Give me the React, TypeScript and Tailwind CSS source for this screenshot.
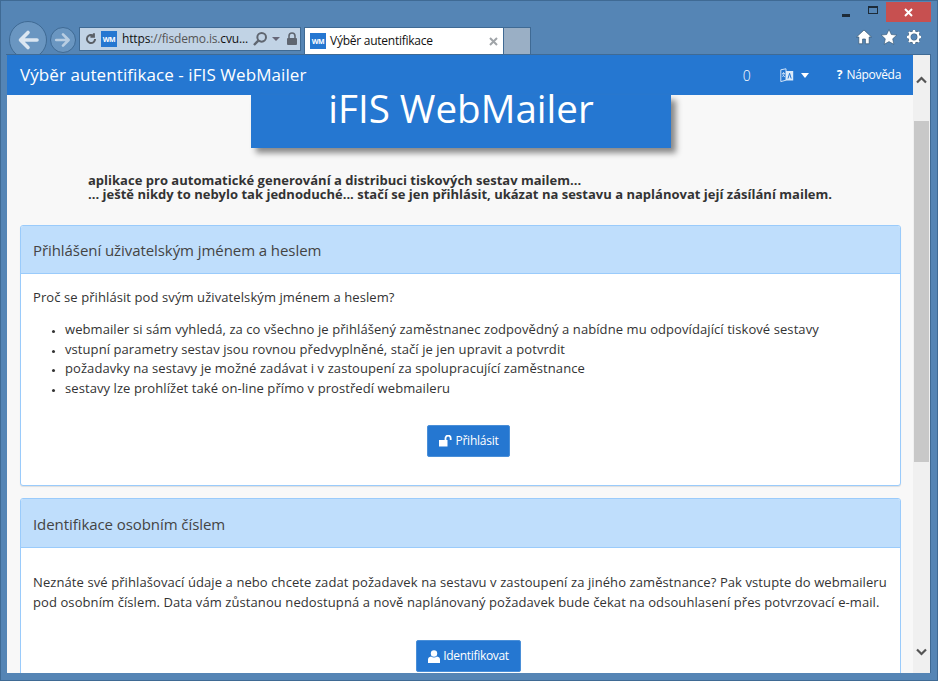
import React from "react";

const font = { fontFamily: '"Open Sans", "Noto Sans", sans-serif' };

function WM({ className }: { className: string }) {
  return (
    <span className={`flex items-center justify-center bg-[#2577d1] text-white font-bold text-[7px] leading-none tracking-tighter ${className}`}>WM</span>
  );
}

function NavArrow({ size, color }: { size: number; color: string }) {
  return (
    <svg width={size} height={size} viewBox="0 0 24 24" fill="none">
      <path d="M21 12H5M12 4.5L4.5 12l7.5 7.5" stroke={color} strokeWidth="3.6" strokeLinecap="round" strokeLinejoin="round" />
    </svg>
  );
}

export default function App() {
  return (
    <div style={font} className="w-[938px] h-[681px] overflow-hidden bg-[#5585b5] border border-[#3f6a94] flex flex-col text-[#333]">
      {/* Title row */}
      <div className="h-[20px] mt-[1px] flex justify-end items-start pr-[6px] shrink-0">
        <div className="flex items-center mr-[8px] gap-[18px] h-[20px]">
          <span className="w-[8px] h-[3px] bg-[#1d2b38] mt-[6px]" />
          <span className="w-[10px] h-[8px] border border-t-2 border-[#1d2b38] -mt-[5px]" />
        </div>
        <div className="w-[45px] h-[20px] bg-[#c75050] flex items-center justify-center">
          <svg width="9" height="9" viewBox="0 0 9 9"><path d="M1 1l7 7M8 1L1 8" stroke="#fff" strokeWidth="2" /></svg>
        </div>
      </div>
      {/* Toolbar row */}
      <div className="h-[32px] shrink-0 flex items-start pl-[8px] pr-[15px]">
        <div className="w-[38px] h-[38px] -mt-[1px] rounded-full border border-[#3f6a94] bg-[#6a96c1] flex items-center justify-center">
          <NavArrow size={24} color="#dbe6f1" />
        </div>
        <div className="w-[26px] h-[26px] ml-[3px] mt-[5px] rounded-full border border-[#3f6a94] bg-[#6a96c1] flex items-center justify-center rotate-180">
          <NavArrow size={18} color="#b8cde2" />
        </div>
        <div className="w-[222px] h-[24px] ml-[3px] mt-[5px] border border-[#3f6a94] bg-[#c1d3e5] flex items-center pl-[4px] shrink-0">
          <svg width="14" height="14" viewBox="0 0 24 24" fill="none"><path d="M19 12a7 7 0 1 1-2.5-5.4M17 2v6h-6" stroke="#5a5f66" strokeWidth="3.4" /></svg>
          <WM className="w-[16px] h-[16px] ml-[3px]" />
          <span className="ml-[5px] text-[12px] leading-none tracking-[-0.15px] text-[#111] whitespace-nowrap w-[131px] shrink-0">https<span className="text-[#555]">://fisdemo.is.</span>cvu...</span>
          <svg className="-ml-[1px] shrink-0" width="16" height="16" viewBox="0 0 24 24" fill="none"><circle cx="14.5" cy="9.5" r="6.5" stroke="#5f6670" strokeWidth="3" /><path d="M9.5 14.5L3 21" stroke="#5f6670" strokeWidth="3.6" /></svg>
          <span className="ml-[4px] w-0 h-0 border-x-[4px] border-x-transparent border-t-[4px] border-t-[#667]" />
          <svg className="ml-[6px] shrink-0" width="12" height="14" viewBox="0 0 12 14"><path d="M3 6V4a3 3 0 0 1 6 0v2" fill="none" stroke="#5f6670" strokeWidth="1.6" /><rect x="1" y="6" width="10" height="7" rx="1" fill="#5f6670" /></svg>
        </div>
        <div className="ml-[3px] mt-[5px] h-[27px] flex shrink-0">
          <div className="w-[200px] border-x border-t border-[#3f6a94] bg-white flex items-center pl-[5px] pr-[5px]">
            <WM className="w-[16px] h-[16px]" />
            <span className="ml-[4px] text-[12px] tracking-[-0.25px] text-[#111] whitespace-nowrap flex-1">Výběr autentifikace</span>
            <svg width="9" height="9" viewBox="0 0 9 9"><path d="M1 1l7 7M8 1L1 8" stroke="#a0a4a8" strokeWidth="2" /></svg>
          </div>
          <div className="w-[27px] border-t border-r border-[#3f6a94] bg-[#9aafc5]" />
        </div>
        <div className="flex-1" />
        <div className="flex items-center gap-[9px] mt-[7px] text-white">
          <svg width="16" height="16" viewBox="0 0 16 16"><path d="M8 1L.5 8h2.3v6.8h3.8V10h2.8v4.8h3.8V8h2.3z" fill="#fff" stroke="#34546f" strokeWidth=".7" /></svg>
          <svg width="16" height="16" viewBox="0 0 16 16"><path d="M8 .5l2.3 5 5.5.6-4.1 3.7 1.1 5.5L8 12.6l-4.8 2.7 1.1-5.5L.2 6.1l5.5-.6z" fill="#fff" stroke="#34546f" strokeWidth=".6" /></svg>
          <svg width="16" height="16" viewBox="0 0 16 16"><path d="M8 1v14M1 8h14M3 3l10 10M13 3L3 13" stroke="#34546f" strokeWidth="3.2" strokeDasharray="2.6 9" /><circle cx="8" cy="8" r="4.6" fill="none" stroke="#34546f" strokeWidth="3.4" /><circle cx="8" cy="8" r="4.6" fill="none" stroke="#fff" strokeWidth="2.4" /><path d="M8 1v14M1 8h14M3 3l10 10M13 3L3 13" stroke="#fff" strokeWidth="2.4" strokeDasharray="2.6 9" /></svg>
        </div>
      </div>
      {/* Viewport */}
      <div className="ml-[5px] mr-[6px] h-[619px] flex border border-[#3f6a94] border-b-0 border-l-0 shrink-0 overflow-hidden">
        <div className="ml-[1px] flex-1 min-w-0 bg-[#f8f8f8] overflow-hidden">
          <header className="h-[40px] bg-[#2577d1] text-white flex items-center pl-[13px] pr-[12px]">
            <span className="text-[17px] whitespace-nowrap tracking-[0.08px]">Výběr autentifikace - iFIS WebMailer</span>
            <span className="flex-1" />
            <span className="text-[14px] font-light">0</span>
            <svg className="ml-[29px]" width="14" height="15" viewBox="0 0 14 15">
              <path d="M.8 1.8L6 .8v11.4l-5.2 1.4z" fill="none" stroke="#cfe2f7" strokeWidth="1" />
              <path d="M6 3h7.2v9.5H6z" fill="#dcebfa" />
              <path d="M8 10.5l1.6-5.2 1.6 5.2" fill="none" stroke="#2577d1" strokeWidth="1" />
              <path d="M2 5.5h3M3.5 4v1.5M4.5 5.5L2.5 9M2.5 6.5L5 9" fill="none" stroke="#cfe2f7" strokeWidth=".8" />
            </svg>
            <span className="ml-[7px] w-0 h-0 border-x-[4.5px] border-x-transparent border-t-[5px] border-t-white" />
            <span className="ml-[28px] font-bold text-[12px]">?</span>
            <span className="ml-[4px] text-[12px] tracking-[-0.3px]">Nápověda</span>
          </header>
          <div className="flex justify-center">
            <div className="ml-[2px] w-[420px] h-[53px] bg-[#2577d1] text-white text-[38.6px] leading-[27px] flex justify-center whitespace-nowrap shadow-[5px_5px_6px_#888]">iFIS WebMailer</div>
          </div>
          <p className="mt-[25px] ml-[81px] text-[13px] leading-[14px] font-bold text-[#333] whitespace-nowrap tracking-[0.01px]">
            aplikace pro automatické generování a distribuci tiskových sestav mailem...<br />
            ... ještě nikdy to nebylo tak jednoduché... stačí se jen přihlásit, ukázat na sestavu a naplánovat její zásílání mailem.
          </p>
          <section className="mt-[24px] ml-[13px] mr-[12px] h-[261px] bg-white border border-[#9acbfb] rounded-[3px] shadow-[0_1px_1px_rgba(0,0,0,0.1)] overflow-hidden">
            <h2 className="h-[48px] pt-[2px] bg-[#bfdefc] border-b border-[#9acbfb] flex items-center pl-[12px] text-[15px] tracking-[-0.07px] font-normal text-[#444]">Přihlášení uživatelským jménem a heslem</h2>
            <div className="pl-[12px] pt-[13px]">
              <p className="text-[13px] leading-[20px] tracking-[0.09px] text-[#333]">Proč se přihlásit pod svým uživatelským jménem a heslem?</p>
              <ul className="mt-[13px] pl-[32px] list-disc marker:text-[9px] text-[13px] leading-[19.6px] tracking-[0.08px] text-[#333]">
                <li>webmailer si sám vyhledá, za co všechno je přihlášený zaměstnanec zodpovědný a nabídne mu odpovídající tiskové sestavy</li>
                <li>vstupní parametry sestav jsou rovnou předvyplněné, stačí je jen upravit a potvrdit</li>
                <li>požadavky na sestavy je možné zadávat i v zastoupení za spolupracující zaměstnance</li>
                <li>sestavy lze prohlížet také on-line přímo v prostředí webmaileru</li>
              </ul>
              <div className="mt-[27px] flex justify-center pl-[4px]">
                <button className="h-[32px] w-[83px] bg-[#2577d1] border border-[#4a8fd8] rounded-[2px] text-white text-[12px] tracking-[-0.25px] flex items-center justify-center gap-[4px]">
                  <svg width="13" height="12" viewBox="0 0 13 12"><path d="M0 5h8.5v6.5H0z" fill="#fff" /><path d="M6.5 5V3.2a2.6 2.6 0 0 1 5.2 0V5" fill="none" stroke="#fff" strokeWidth="1.8" /></svg>
                  Přihlásit
                </button>
              </div>
            </div>
          </section>
          <section className="mt-[12px] ml-[13px] mr-[12px] h-[300px] bg-white border border-[#9acbfb] rounded-[3px] overflow-hidden">
            <h2 className="h-[49px] pt-[2px] bg-[#bfdefc] border-b border-[#9acbfb] flex items-center pl-[12px] text-[15px] tracking-[-0.07px] font-normal text-[#444]">Identifikace osobním číslem</h2>
            <div className="pl-[12px] pt-[24px]">
              <p className="text-[13px] leading-[20px] tracking-[0.09px] text-[#333] whitespace-nowrap">
                Neznáte své přihlašovací údaje a nebo chcete zadat požadavek na sestavu v zastoupení za jiného zaměstnance? Pak vstupte do webmaileru<br />
                pod osobním číslem. Data vám zůstanou nedostupná a nově naplánovaný požadavek bude čekat na odsouhlasení přes potvrzovací e-mail.
              </p>
              <div className="mt-[28px] flex justify-center pl-[4px]">
                <button className="h-[32px] w-[105px] bg-[#2577d1] border border-[#4a8fd8] rounded-[2px] text-white text-[12px] tracking-[-0.3px] flex items-center justify-center gap-[3px]">
                  <svg width="12" height="13" viewBox="0 0 12 13"><circle cx="6" cy="3.5" r="3.2" fill="#fff" /><path d="M0 13V9.5Q0 7 3 6.5q3 2 6 0 3 .5 3 3V13z" fill="#fff" /></svg>
                  Identifikovat
                </button>
              </div>
            </div>
          </section>
        </div>
        {/* Scrollbar */}
        <div className="w-[17px] shrink-0 bg-[#f0f0f0] flex flex-col items-center">
          <svg className="mt-[21px] shrink-0" width="11" height="8" viewBox="0 0 11 8"><path d="M1 6.5l4.5-4.5L10 6.5" fill="none" stroke="#555" strokeWidth="2.2" /></svg>
          <div className="mt-[37px] w-[15px] h-[341px] bg-[#c8c8c8] shrink-0" />
          <div className="flex-1" />
          <svg className="mb-[17px] shrink-0" width="11" height="8" viewBox="0 0 11 8"><path d="M1 1.5L5.5 6 10 1.5" fill="none" stroke="#555" strokeWidth="2.2" /></svg>
        </div>
      </div>
    </div>
  );
}
